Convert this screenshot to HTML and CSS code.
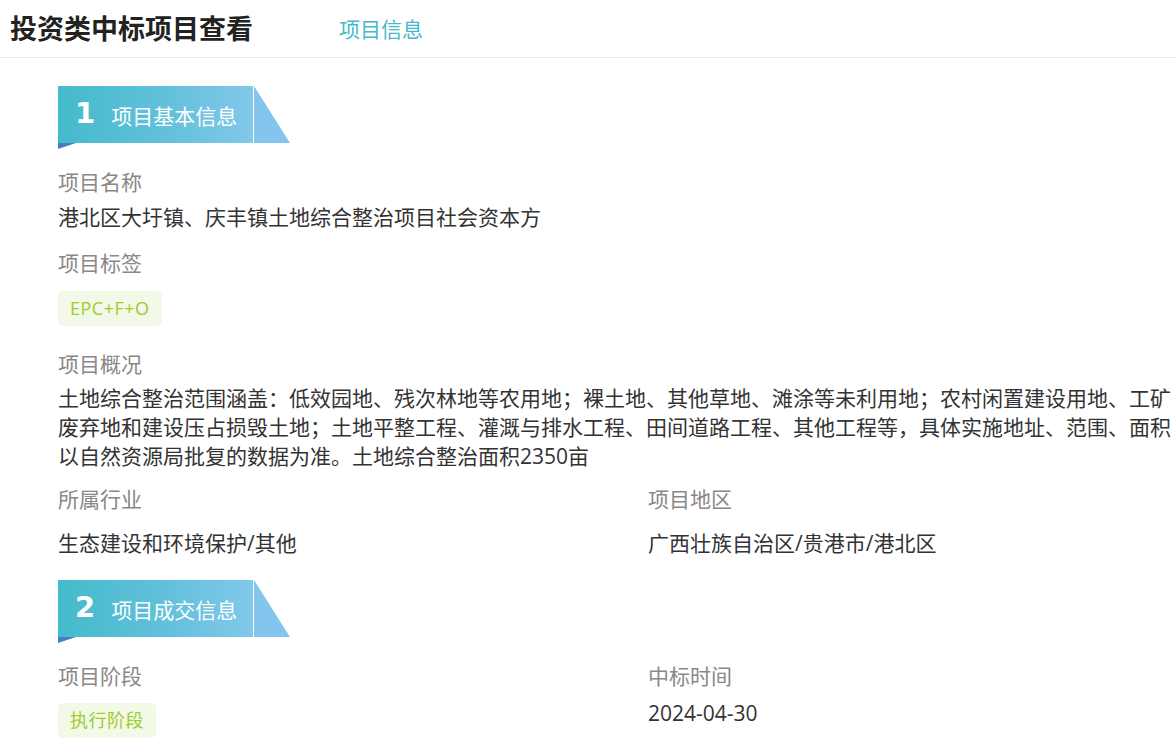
FILE: index.html
```html
<!DOCTYPE html>
<html lang="zh-CN">
<head>
    <meta charset="UTF-8">
    <meta name="viewport" content="width=device-width, initial-scale=1.0">
    <title>投资类中标项目查看</title>
    <link rel="stylesheet" href="styles.css">
</head>
<body>
    <div class="header">
        <h1 class="page-title">投资类中标项目查看</h1>
        <span class="tab">项目信息</span>
    </div>

    <div class="content">
        <div class="banner">
            <div class="banner-main">
                <span class="banner-num">1</span>
                <span class="banner-text">项目基本信息</span>
            </div>
            <div class="banner-tail"></div>
        </div>

        <div class="field first">
            <div class="label">项目名称</div>
            <div class="value">港北区大圩镇、庆丰镇土地综合整治项目社会资本方</div>
        </div>
        <div class="field">
            <div class="label">项目标签</div>
            <span class="tag">EPC+F+O</span>
        </div>
        <div class="field loose">
            <div class="label">项目概况</div>
            <p class="desc">土地综合整治范围涵盖：低效园地、残次林地等农用地；裸土地、其他草地、滩涂等未利用地；农村闲置建设用地、工矿废弃地和建设压占损毁土地；土地平整工程、灌溉与排水工程、田间道路工程、其他工程等，具体实施地址、范围、面积以自然资源局批复的数据为准。土地综合整治面积2350亩</p>
        </div>
        <div class="row">
            <div class="field">
                <div class="label">所属行业</div>
                <div class="value spaced">生态建设和环境保护/其他</div>
            </div>
            <div class="field">
                <div class="label">项目地区</div>
                <div class="value spaced">广西壮族自治区/贵港市/港北区</div>
            </div>
        </div>

        <div class="banner second">
            <div class="banner-main">
                <span class="banner-num">2</span>
                <span class="banner-text">项目成交信息</span>
            </div>
            <div class="banner-tail"></div>
        </div>

        <div class="row first">
            <div class="field">
                <div class="label">项目阶段</div>
                <span class="tag">执行阶段</span>
            </div>
            <div class="field">
                <div class="label">中标时间</div>
                <div class="value date">2024-04-30</div>
            </div>
        </div>
    </div>
</body>
</html>
```

FILE: styles.css
```css
body {
    margin: 0;
    padding: 0;
    background-color: #fff;
    font-family: "Open Sans", "Noto Sans CJK SC", sans-serif;
    color: #333;
}
.header {
    display: flex;
    align-items: center;
    height: 57px;
    padding-left: 10px;
    border-bottom: 1px solid #ebebeb;
}
.page-title {
    margin: 0;
    font-size: 27px;
    font-weight: bold;
    color: #222;
    line-height: 1;
}
.tab {
    margin-left: 86px;
    font-size: 21px;
    color: #45b8cc;
    margin-top: -2px;
}
.content {
    padding: 28px 0 20px 58px;
}

/* section banner */
.banner {
    position: relative;
    display: flex;
    height: 57px;
    width: 232px;
}
.banner.second {
    margin-top: 23px;
}
.banner-main {
    display: flex;
    align-items: center;
    width: 195px;
    padding-left: 17px;
    box-sizing: border-box;
    background: linear-gradient(90deg, #44bbcb 0%, #62c0db 55%, #82c8ea 100%);
    color: #fff;
}
.banner-num {
    font-family: "DejaVu Sans", sans-serif;
    font-weight: bold;
    font-size: 29px;
    line-height: 1;
    margin-top: -3px;
}
.banner-text {
    margin-left: 16px;
    font-size: 21px;
    margin-top: 1px;
}
.banner-tail {
    width: 36px;
    margin-left: 1px;
    background-color: #84c5ee;
    clip-path: polygon(0 0, 100% 100%, 0 100%);
}
.banner::after {
    content: "";
    position: absolute;
    left: 0;
    top: 57px;
    width: 18px;
    height: 6px;
    background-color: #4a7cc6;
    clip-path: polygon(0 0, 100% 0, 0 100%);
}

/* fields */
.field {
    margin-top: 18px;
}
.field.first {
    margin-top: 25px;
}
.field.loose {
    margin-top: 24px;
}
.label {
    font-size: 21px;
    line-height: 28px;
    color: #888;
}
.value {
    margin-top: 7px;
    font-size: 21px;
    line-height: 28px;
    color: #333;
}
.value.spaced {
    margin-top: 16px;
}
.value.date {
    margin-top: 9px;
}
.tag {
    display: inline-block;
    margin-top: 14px;
    padding: 0 12px;
    height: 35px;
    line-height: 35px;
    font-size: 18px;
    letter-spacing: 0.5px;
    color: #9ccc2e;
    background-color: #f3f9e7;
    border-radius: 5px;
}
.desc {
    margin: 6px 0 0 0;
    font-size: 21px;
    line-height: 29px;
    color: #333;
}
.row {
    display: grid;
    grid-template-columns: 590px 1fr;
    margin-top: 14px;
}
.row .field {
    margin-top: 0;
}
.row.first {
    margin-top: 25px;
}
.row.first .tag {
    margin-top: 13px;
}
```
